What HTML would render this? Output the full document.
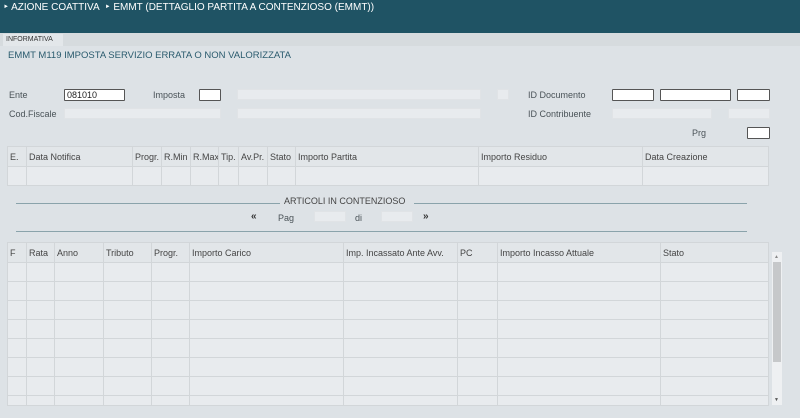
<!DOCTYPE html><html><head><style>
*{margin:0;padding:0;box-sizing:border-box}
body{width:800px;height:418px;overflow:hidden;background:#dde2e6;font-family:"Liberation Sans",sans-serif;font-size:9px;color:#4a5358;position:relative}
.a{position:absolute}
.hd{left:0;top:0;width:800px;height:33px;background:#1f5364;color:#fff;font-size:10px;padding:2px 0 0 3px}
.strip{top:33px;left:0;width:800px;height:13px;background:#d6dbde}
.tab{top:34px;left:3px;width:60px;height:12px;background:#e3e7ea;font-size:7px;color:#333;padding:2px 0 0 3px}
.inp{position:absolute;height:11px;background:#e8ebee;border:1px solid #e0e3e6}
.w{background:#fff;border:1px solid #555;border-radius:1px}
table{position:absolute;border-collapse:collapse;table-layout:fixed}
td{border:1px solid #d2d6d9;padding:0 2px;overflow:hidden;white-space:nowrap;background:#e8ebee}
tr.h td{background:#e2e6e9;color:#444}
</style></head><body>
<div class="a hd">‣ AZIONE COATTIVA &nbsp;‣ EMMT (DETTAGLIO PARTITA A CONTENZIOSO (EMMT))</div>
<div class="a strip"></div><div class="a tab">INFORMATIVA</div>
<div class="a" style="left:8px;top:50px;font-size:9.5px;color:#2a5b6e">EMMT M119 IMPOSTA SERVIZIO ERRATA O NON VALORIZZATA</div>
<div class="a" style="left:9px;top:90px">Ente</div>
<div class="inp w" style="left:64px;top:89px;width:61px;height:12px;color:#222;padding-left:2px;font-size:9px;line-height:10px">081010</div>
<div class="a" style="left:153px;top:90px">Imposta</div>
<div class="inp w" style="left:199px;top:89px;width:22px;height:12px"></div>
<div class="inp" style="left:237px;top:89px;width:244px"></div>
<div class="inp" style="left:497px;top:89px;width:12px"></div>
<div class="a" style="left:528px;top:90px">ID Documento</div>
<div class="inp w" style="left:612px;top:89px;width:42px;height:12px"></div>
<div class="inp w" style="left:660px;top:89px;width:71px;height:12px"></div>
<div class="inp w" style="left:737px;top:89px;width:33px;height:12px"></div>
<div class="a" style="left:9px;top:109px">Cod.Fiscale</div>
<div class="inp" style="left:64px;top:108px;width:157px"></div>
<div class="inp" style="left:237px;top:108px;width:244px"></div>
<div class="a" style="left:528px;top:109px">ID Contribuente</div>
<div class="inp" style="left:612px;top:108px;width:100px"></div>
<div class="inp" style="left:728px;top:108px;width:42px"></div>
<div class="a" style="left:692px;top:128px">Prg</div>
<div class="inp w" style="left:747px;top:127px;width:23px;height:12px"></div>
<table style="left:7px;top:146px;width:761px">
<colgroup><col style="width:19px"><col style="width:106px"><col style="width:29px"><col style="width:29px"><col style="width:28px"><col style="width:20px"><col style="width:29px"><col style="width:28px"><col style="width:183px"><col style="width:164px"><col style="width:126px"></colgroup>
<tr class="h" style="height:20px"><td>E.</td><td>Data Notifica</td><td>Progr.</td><td>R.Min</td><td>R.Max</td><td>Tip.</td><td>Av.Pr.</td><td>Stato</td><td>Importo Partita</td><td>Importo Residuo</td><td>Data Creazione</td></tr>
<tr style="height:19px"><td></td><td></td><td></td><td></td><td></td><td></td><td></td><td></td><td></td><td></td><td></td></tr></table>
<div class="a" style="left:16px;top:203px;width:264px;height:1px;background:#8aa3ab"></div>
<div class="a" style="left:284px;top:196px;color:#444">ARTICOLI IN CONTENZIOSO</div>
<div class="a" style="left:414px;top:203px;width:333px;height:1px;background:#8aa3ab"></div>
<div class="a" style="left:251px;top:211px;font-weight:bold;font-size:10px;color:#333">«</div>
<div class="a" style="left:278px;top:213px">Pag</div>
<div class="inp" style="left:314px;top:211px;width:32px"></div>
<div class="a" style="left:355px;top:213px">di</div>
<div class="inp" style="left:381px;top:211px;width:32px"></div>
<div class="a" style="left:423px;top:211px;font-weight:bold;font-size:10px;color:#333">»</div>
<div class="a" style="left:16px;top:231px;width:731px;height:1px;background:#8aa3ab"></div>
<table style="left:7px;top:242px;width:761px">
<colgroup><col style="width:19px"><col style="width:28px"><col style="width:49px"><col style="width:48px"><col style="width:38px"><col style="width:154px"><col style="width:114px"><col style="width:40px"><col style="width:163px"><col style="width:108px"></colgroup>
<tr class="h" style="height:20px"><td>F</td><td>Rata</td><td>Anno</td><td>Tributo</td><td>Progr.</td><td>Importo Carico</td><td>Imp. Incassato Ante Avv.</td><td>PC</td><td>Importo Incasso Attuale</td><td>Stato</td></tr>
<tr style="height:19px"><td></td><td></td><td></td><td></td><td></td><td></td><td></td><td></td><td></td><td></td></tr>
<tr style="height:19px"><td></td><td></td><td></td><td></td><td></td><td></td><td></td><td></td><td></td><td></td></tr>
<tr style="height:19px"><td></td><td></td><td></td><td></td><td></td><td></td><td></td><td></td><td></td><td></td></tr>
<tr style="height:19px"><td></td><td></td><td></td><td></td><td></td><td></td><td></td><td></td><td></td><td></td></tr>
<tr style="height:19px"><td></td><td></td><td></td><td></td><td></td><td></td><td></td><td></td><td></td><td></td></tr>
<tr style="height:19px"><td></td><td></td><td></td><td></td><td></td><td></td><td></td><td></td><td></td><td></td></tr>
<tr style="height:19px"><td></td><td></td><td></td><td></td><td></td><td></td><td></td><td></td><td></td><td></td></tr>
<tr style="height:10px"><td></td><td></td><td></td><td></td><td></td><td></td><td></td><td></td><td></td><td></td></tr>
</table>
<div class="a" style="left:772px;top:252px;width:10px;height:153px;background:#eef0f2"></div>
<div class="a" style="left:773px;top:262px;width:8px;height:100px;background:#c6c8ca"></div>
<div class="a" style="left:774px;top:254px;font-size:5px;color:#888">▲</div>
<div class="a" style="left:774px;top:397px;font-size:5px;color:#555">▼</div>
</body></html>
